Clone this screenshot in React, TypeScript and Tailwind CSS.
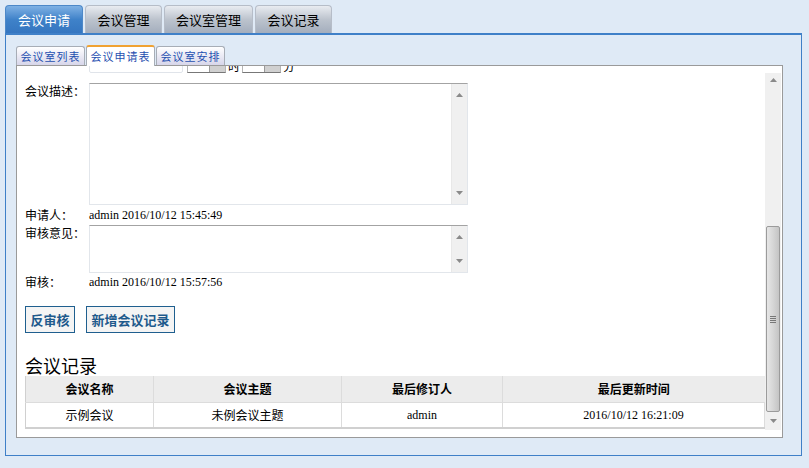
import React from "react";

const cjk = "font-['Noto_Sans_CJK_SC',sans-serif]";
const serif = "font-['Liberation_Serif','Noto_Sans_CJK_SC',serif]";

const mainTabs = ["会议申请", "会议管理", "会议室管理", "会议记录"];
const subTabs = ["会议室列表", "会议申请表", "会议室安排"];

const rows = [
  { name: "示例会议", topic: "未例会议主题", editor: "admin", time: "2016/10/12 16:21:09" },
];

const ArrowUp = () => (
  <svg width="7" height="4" viewBox="0 0 7 4">
    <path d="M0 4 L3.5 0 L7 4 Z" fill="#8a8a8a" />
  </svg>
);

const ArrowDown = () => (
  <svg width="7" height="4" viewBox="0 0 7 4">
    <path d="M0 0 L7 0 L3.5 4 Z" fill="#8a8a8a" />
  </svg>
);

// fake old-style textarea with its own scrollbar strip
const FakeTextarea = ({ height }: { height: string }) => (
  <div
    className={`flex w-[379px] ${height} border border-t-[#a3a3a3] border-l-[#e2e6eb] border-r-[#e2e6eb] border-b-[#e2e6eb] bg-white`}
  >
    <div className="flex-1" />
    <div className="flex w-[16px] flex-col items-center justify-between bg-[#f0f0f0] py-[9px] border-l border-[#e8e8e8]">
      <ArrowUp />
      <ArrowDown />
    </div>
  </div>
);

const SelectBox = () => (
  <div className="flex h-[20px] w-[39px] items-end border border-t-[#a0a0a0] border-x-[#b5b5b5] border-b-[#777]">
    <div className="flex-1" />
    <div className="h-full w-[16px] bg-[#d0d0d0] border-l border-[#999]" />
  </div>
);

export default function App() {
  return (
    <div className={`h-[468px] w-[809px] bg-[#dfeaf6] px-[5px] pt-[5px] ${cjk}`}>
      {/* top tabs */}
      <div className="flex h-[28px] items-end gap-[2px]">
        {mainTabs.map((t, i) =>
          i === 0 ? (
            <div
              key={t}
              className="flex h-[28px] w-[78px] items-center justify-center rounded-t-[4px] border border-b-0 border-[#4d88c8] bg-gradient-to-b from-[#7fb1e4] via-[#3f82c9] to-[#3576c0] text-[13px] text-white"
            >
              {t}
            </div>
          ) : (
            <div
              key={t}
              className={`flex h-[28px] ${i === 2 ? "w-[89px]" : "w-[77px]"} items-center justify-center rounded-t-[4px] border border-b-0 border-[#b6bdc8] bg-gradient-to-b from-[#e9ecf1] via-[#bcc3cd] to-[#a4aebd] text-[13px] text-black`}
            >
              {t}
            </div>
          )
        )}
      </div>

      {/* panel */}
      <div className="h-[423px] w-[797px] border-x border-b border-t-[2px] border-[#3f80c8] pl-[10px] pt-[10px]">
        {/* sub tabs */}
        <div className="flex h-[20px] items-end gap-[1px]">
          {subTabs.map((t, i) =>
            i === 1 ? (
              <div
                key={t}
                className="relative z-10 -mb-[1px] flex h-[21px] w-[69px] items-center justify-center rounded-t-[3px] border border-b-0 border-[#a7adb6] border-t-[2px] border-t-[#f0a232] bg-white text-[11px] tracking-[1px] text-[#1f50b0]"
              >
                {t}
              </div>
            ) : (
              <div
                key={t}
                className="flex h-[19px] w-[69px] items-center justify-center rounded-t-[3px] border border-b-0 border-[#a7adb6] bg-gradient-to-b from-white to-[#d7d6ea] text-[11px] tracking-[1px] text-[#1f50b0]"
              >
                {t}
              </div>
            )
          )}
        </div>

        {/* content box */}
        <div className="flex h-[373px] w-[767px] border border-[#9a9a9a] bg-white">
          <div className="flex flex-1 flex-col overflow-hidden pl-[8px]">
            {/* partially scrolled row */}
            <div className="flex h-[7px] items-end overflow-hidden">
              <div className="w-[64px]" />
              <div className="h-[20px] w-[94px] rounded-b-[2px] border border-[#e0e4ea]" />
              <div className="ml-[4px] flex items-end gap-[2px] text-[12px] leading-[14px]">
                <SelectBox />
                <span>时</span>
                <SelectBox />
                <span>分</span>
              </div>
            </div>

            <div className="mt-[10px] flex">
              <div className="w-[64px] pt-[1px] text-[12px] leading-[14px]">会议描述：</div>
              <FakeTextarea height="h-[122px]" />
            </div>

            <div className="mt-[3px] flex h-[14px] items-center text-[12px]">
              <div className="w-[64px]">申请人：</div>
              <div className={`${serif} text-[12px]`}>admin 2016/10/12 15:45:49</div>
            </div>

            <div className="mt-[3px] flex">
              <div className="w-[64px] pt-[1px] text-[12px] leading-[14px]">审核意见：</div>
              <FakeTextarea height="h-[48px]" />
            </div>

            <div className="mt-[2px] flex h-[14px] items-center text-[12px]">
              <div className="w-[64px]">审核：</div>
              <div className={`${serif} text-[12px]`}>admin 2016/10/12 15:57:56</div>
            </div>

            <div className="mt-[17px] flex gap-[11px]">
              <button className="h-[27px] w-[50px] border border-[#1f5f8f] bg-[#f4f4f4] text-[13px] font-bold text-[#1e5a8c]">
                反审核
              </button>
              <button className="h-[27px] w-[89px] border border-[#1f5f8f] bg-[#f4f4f4] text-[13px] font-bold text-[#1e5a8c]">
                新增会议记录
              </button>
            </div>

            <div className="mt-[21px] text-[18px] leading-[22px] text-black">会议记录</div>

            <table className="w-[740px] border-collapse border-b-[2px] border-l border-[#d0d0d0] text-[12px]">
              <thead>
                <tr className="h-[26px] bg-[#ececec]">
                  <th className="w-[128px] border-r border-b border-[#dcdcdc] font-bold">会议名称</th>
                  <th className="w-[188px] border-r border-b border-[#dcdcdc] font-bold">会议主题</th>
                  <th className="w-[161px] border-r border-b border-[#dcdcdc] font-bold">最后修订人</th>
                  <th className="border-b border-[#dcdcdc] font-bold">最后更新时间</th>
                </tr>
              </thead>
              <tbody>
                {rows.map((r) => (
                  <tr key={r.name} className="h-[26px]">
                    <td className="border-r border-[#dcdcdc] text-center">{r.name}</td>
                    <td className="border-r border-[#dcdcdc] text-center">{r.topic}</td>
                    <td className={`border-r border-[#dcdcdc] text-center ${serif}`}>{r.editor}</td>
                    <td className={`border-r border-[#dcdcdc] text-center ${serif}`}>{r.time}</td>
                  </tr>
                ))}
              </tbody>
            </table>
          </div>

          {/* outer scrollbar */}
          <div className="mr-[1px] mt-[7px] mb-[7px] flex w-[16px] flex-col items-center bg-[#f0f0f0]">
            <div className="flex h-[14px] items-center">
              <ArrowUp />
            </div>
            <div className="h-[139px]" />
            <div className="flex h-[186px] w-[14px] items-center justify-center rounded-[2px] border border-[#9b9b9b] bg-gradient-to-r from-[#e6e6e6] via-[#d6d6d6] to-[#c4c4c4]">
              <div className="flex flex-col gap-[1px]">
                <div className="h-[1px] w-[6px] bg-[#777]" />
                <div className="h-[1px] w-[6px] bg-[#777]" />
                <div className="h-[1px] w-[6px] bg-[#777]" />
                <div className="h-[1px] w-[6px] bg-[#777]" />
              </div>
            </div>
            <div className="flex flex-1 items-center">
              <ArrowDown />
            </div>
          </div>
        </div>
      </div>
    </div>
  );
}
